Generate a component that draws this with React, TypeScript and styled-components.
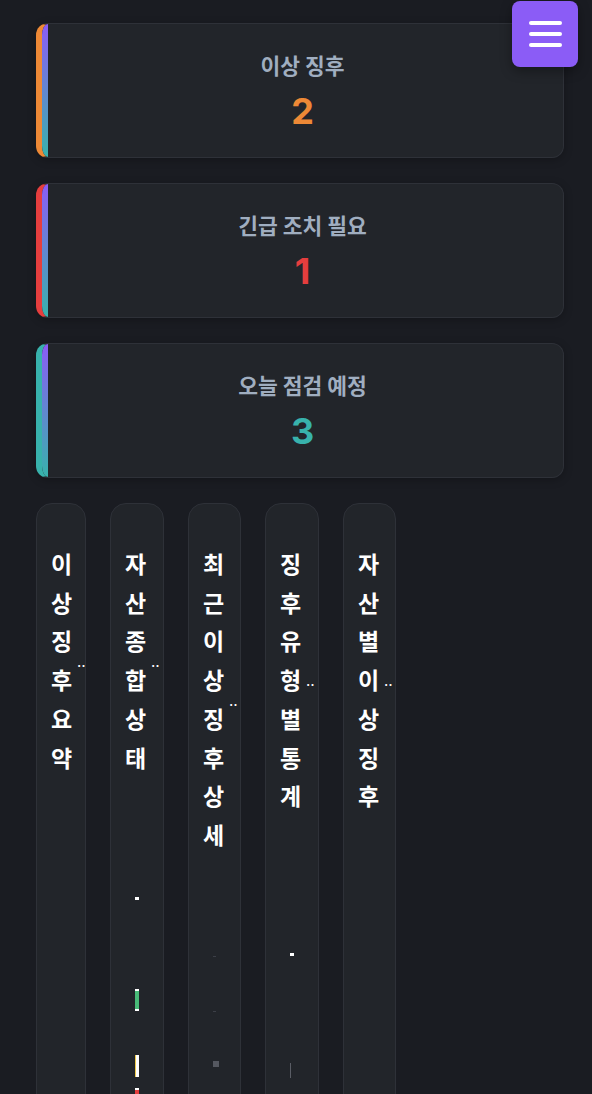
import React from "react";
import styled, { createGlobalStyle } from "styled-components";

const Global = createGlobalStyle`
  html, body { margin: 0; padding: 0; background: #1a1c22; }
  body {
    font-family: Inter, "Noto Sans CJK KR", "Noto Sans", sans-serif;
    color: #ffffff;
    overflow: hidden;
  }
`;

const Page = styled.div`
  min-height: 1094px;
  padding: 23px 28px 0 36px;
  box-sizing: border-box;
  display: flex;
  flex-direction: column;
  gap: 25px;
`;

const MenuButton = styled.button`
  position: fixed;
  top: 1px;
  right: 14px;
  width: 66px;
  height: 66px;
  border: none;
  border-radius: 8px;
  background: #8b5cf6;
  box-shadow: 0 4px 12px rgba(0, 0, 0, 0.35);
  display: flex;
  flex-direction: column;
  align-items: center;
  justify-content: center;
  gap: 7px;
  padding: 0;
  cursor: pointer;
`;

const MenuLine = styled.span`
  display: block;
  width: 33px;
  height: 4px;
  border-radius: 2px;
  background: #ffffff;
`;

const StatCard = styled.div<{ $accent: string }>`
  position: relative;
  overflow: hidden;
  height: 135px;
  box-sizing: border-box;
  background: #22252a;
  border: 1px solid #2e3138;
  border-left: 6px solid ${(p) => p.$accent};
  border-radius: 12px;
  padding: 26px 24px 0;
  display: flex;
  flex-direction: column;
  align-items: center;
  box-shadow: 0 2px 8px rgba(0, 0, 0, 0.25);

  &::before {
    content: "";
    position: absolute;
    left: 0;
    top: 0;
    bottom: 0;
    width: 6px;
    background: linear-gradient(180deg, #8b5cf6 0%, #38b2ac 100%);
  }
`;

const StatTitle = styled.div`
  font-family: "Noto Sans CJK KR", Inter, sans-serif;
  font-size: 21.5px;
  line-height: 30px;
  font-weight: 700;
  color: #a0aec0;
  margin-bottom: 10px;
`;

const StatValue = styled.div<{ $color: string }>`
  font-family: Inter, "Noto Sans", sans-serif;
  font-size: 36px;
  line-height: 43px;
  font-weight: 700;
  color: ${(p) => p.$color};
`;

const Columns = styled.div`
  display: flex;
  gap: 24px;
  align-items: flex-start;
`;

const Column = styled.section<{ $w: number }>`
  width: ${(p) => p.$w}px;
  flex: none;
  height: 700px;
  box-sizing: border-box;
  background: #22252a;
  border: 1px solid #2e3138;
  border-radius: 16px 16px 0 0;
  overflow: hidden;
`;

const Header = styled.div`
  display: flex;
  align-items: center;
  padding: 40px 0 0 14px;
  white-space: nowrap;
`;

const Title = styled.h2`
  margin: 0;
  width: 25px;
  flex: none;
  white-space: normal;
  word-break: break-all;
  font-family: "Noto Sans CJK KR", sans-serif;
  font-size: 23px;
  line-height: 38.7px;
  font-weight: 700;
  color: #ffffff;
`;

const More = styled.span`
  flex: none;
  margin-left: 1px;
  font-family: Inter, sans-serif;
  font-size: 15px;
  line-height: 15px;
  color: #ffffff;
  padding-top: 3px;
`;

const Body = styled.div`
  display: flex;
  flex-direction: column;
  align-items: flex-start;
  padding-left: 24px;
`;

const Mark = styled.span<{ $top: number; $w: number; $h: number; $bg: string; $cap?: string }>`
  display: block;
  margin-top: ${(p) => p.$top}px;
  width: ${(p) => p.$w}px;
  height: ${(p) => p.$h}px;
  background: ${(p) => p.$bg};
  box-sizing: border-box;
  ${(p) => (p.$cap ? `border-top: 2px solid ${p.$cap}; border-bottom: 2px solid ${p.$cap};` : "")}
`;

const SideMark = styled.span<{ $top: number }>`
  display: block;
  margin-top: ${(p) => p.$top}px;
  width: 4px;
  height: 22px;
  background: #ffffff;
  border-left: 1px solid #ecc94b;
  box-sizing: border-box;
`;

const stats = [
  { title: "이상 징후", value: "2", color: "#ed8936" },
  { title: "긴급 조치 필요", value: "1", color: "#e53e3e" },
  { title: "오늘 점검 예정", value: "3", color: "#38b2ac" },
];

export default function App() {
  return (
    <>
      <Global />
      <Page>
        {stats.map((s) => (
          <StatCard key={s.title} $accent={s.color}>
            <StatTitle>{s.title}</StatTitle>
            <StatValue $color={s.color}>{s.value}</StatValue>
          </StatCard>
        ))}
        <Columns>
          <Column $w={50}>
            <Header>
              <Title>이상 징후 요약</Title>
              <More>‥</More>
            </Header>
          </Column>
          <Column $w={54}>
            <Header>
              <Title>자산 종합 상태</Title>
              <More>‥</More>
            </Header>
            <Body>
              <Mark $top={121} $w={4} $h={3} $bg="#ffffff" />
              <Mark $top={89} $w={4} $h={22} $bg="#48bb78" $cap="#ffffff" />
              <SideMark $top={44} />
              <Mark $top={11} $w={4} $h={30} $bg="#e53e3e" $cap="#ffffff" />
            </Body>
          </Column>
          <Column $w={53}>
            <Header>
              <Title>최근 이상 징후 상세</Title>
              <More>‥</More>
            </Header>
            <Body>
              <Mark $top={102} $w={3} $h={1} $bg="#3c3f47" />
              <Mark $top={54} $w={3} $h={1} $bg="#3c3f47" />
              <Mark $top={49} $w={6} $h={6} $bg="#555860" />
            </Body>
          </Column>
          <Column $w={54}>
            <Header>
              <Title>징후 유형별 통계</Title>
              <More>‥</More>
            </Header>
            <Body>
              <Mark $top={138} $w={4} $h={3} $bg="#ffffff" />
              <Mark $top={107} $w={1} $h={15} $bg="#5a5d65" />
            </Body>
          </Column>
          <Column $w={53}>
            <Header>
              <Title>자산별 이상 징후</Title>
              <More>‥</More>
            </Header>
          </Column>
        </Columns>
      </Page>
      <MenuButton aria-label="menu">
        <MenuLine />
        <MenuLine />
        <MenuLine />
      </MenuButton>
    </>
  );
}
